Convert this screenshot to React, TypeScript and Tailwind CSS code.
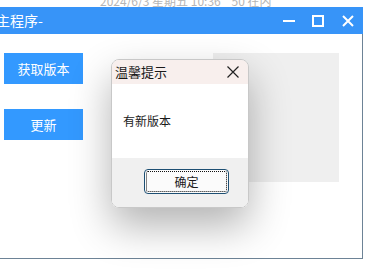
import React from "react";

const font = { fontFamily: '"Microsoft YaHei", "Noto Sans CJK SC", "Noto Sans", sans-serif' };

export default function App() {
  return (
    <div className="relative w-[370px] h-[278px] overflow-hidden bg-white" style={font}>
      {/* faded clipped text on top */}
      <div className="h-[7px] overflow-hidden pl-[100px]">
        <div className="text-[12px] leading-[12px] -mt-[5px] text-[#b5b5b5] whitespace-nowrap">
          2024/6/3 星期五 10:36 &nbsp;&nbsp; 50 在内
        </div>
      </div>
      {/* window */}
      <div className="w-[363px] flex flex-col">
        <div className="h-[27px] bg-[#3794f8] flex items-center text-white">
          <span className="text-[14px] -ml-[4px] flex-1 whitespace-nowrap">主程序-</span>
          <svg width="12" height="12" viewBox="0 0 12 12" className="mr-[17px]">
            <rect x="0" y="5" width="12" height="2" fill="white" />
          </svg>
          <svg width="12" height="12" viewBox="0 0 12 12" className="mr-[18px]">
            <rect x="1" y="1" width="10" height="10" fill="none" stroke="white" strokeWidth="2" />
          </svg>
          <svg width="12" height="12" viewBox="0 0 12 12" className="mr-[9px]">
            <path d="M1 1L11 11M11 1L1 11" stroke="white" strokeWidth="2" />
          </svg>
        </div>
        <div className="h-[225px] border-r border-b border-[#6d8396] flex pt-[19px] pl-[4px]">
          <div className="flex flex-col gap-[25px] w-[79px]">
            <div className="h-[31px] bg-[#3399ff] text-white text-[13px] flex items-center justify-center">获取版本</div>
            <div className="h-[31px] bg-[#3399ff] text-white text-[13px] flex items-center justify-center">更新</div>
          </div>
          <div className="ml-[130px] w-[126px] h-[129px] bg-[#efefef]" />
        </div>
      </div>
      {/* dialog */}
      <div className="absolute left-[111px] top-[59px] w-[138px] h-[149px] rounded-[8px] overflow-hidden border border-[#c8c8c8] flex flex-col shadow-[0_18px_40px_rgba(0,0,0,0.3)]">
        <div className="h-[24px] bg-[#f8efed] flex items-center pl-[3px] pr-[9px]">
          <span className="text-[13px] text-[#1a1a1a] flex-1">温馨提示</span>
          <svg width="12" height="12" viewBox="0 0 12 12">
            <path d="M0.5 0.5L11.5 11.5M11.5 0.5L0.5 11.5" stroke="#222" strokeWidth="1.2" />
          </svg>
        </div>
        <div className="h-[74px] bg-white flex items-center pl-[11px]">
          <span className="text-[12px] text-[#1a1a1a]">有新版本</span>
        </div>
        <div className="flex-1 bg-[#f0f0f0] pt-[11px] pl-[32px]">
          <div className="w-[85px] h-[25px] rounded-[4px] border border-[#1d4f73] bg-[#fbfbfb] p-[1px]">
            <div className="w-full h-full border border-dotted border-[#111] rounded-[2px] flex items-center justify-center text-[12px] text-[#1a1a1a]">
              确定
            </div>
          </div>
        </div>
      </div>
    </div>
  );
}
